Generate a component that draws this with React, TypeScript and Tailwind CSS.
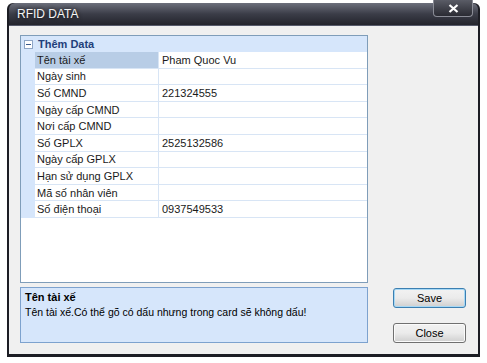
import React from 'react';

type Row = { label: string; value: string };

const rows: Row[] = [
  { label: 'Tên tài xế', value: 'Pham Quoc Vu' },
  { label: 'Ngày sinh', value: '' },
  { label: 'Số CMND', value: '221324555' },
  { label: 'Ngày cấp CMND', value: '' },
  { label: 'Nơi cấp CMND', value: '' },
  { label: 'Số GPLX', value: '2525132586' },
  { label: 'Ngày cấp GPLX', value: '' },
  { label: 'Hạn sử dụng GPLX', value: '' },
  { label: 'Mã số nhân viên', value: '' },
  { label: 'Số điện thoại', value: '0937549533' },
];

function WinButton({ label, focused }: { label: string; focused?: boolean }) {
  return (
    <button
      type="button"
      className={[
        'h-[20px] w-[73px] rounded-[3px] border bg-gradient-to-b from-[#f2f2f2] via-[#ebebeb] to-[#cfcfcf] text-[11px] text-black',
        focused ? 'border-[#3c7fb1] shadow-[inset_0_0_0_1px_#a6d8f5]' : 'border-[#707070] shadow-[inset_0_0_0_1px_#fbfbfb]',
      ].join(' ')}
    >
      {label}
    </button>
  );
}

export default function App() {
  return (
    <div className="relative h-[363px] w-[487px] overflow-hidden bg-white font-['Liberation_Sans',Arial,sans-serif] text-[11px] leading-[14px] text-[#1a1a1a]">
      <div className="ml-[7px] mt-[3px] flex h-[354px] w-[473px] flex-col rounded-t-[6px] bg-[#1c1d24] px-[2px] pb-[3px]">
        <div className="flex h-[22px] items-center rounded-t-[6px] bg-gradient-to-b from-[#6d707c] via-[#3b3d48] to-[#23242c] pl-[8px]">
          <span className="text-[12px] text-[#f4f4f4] [text-shadow:0_0_4px_#000]">RFID DATA</span>
        </div>
        <div className="flex flex-1 border-t border-[#55596a] bg-[#f0f0f0] pl-[11px] pr-[12px] pt-[9px]">
          <div className="flex w-[348px] flex-col gap-[4px]">
            <div className="flex h-[248px] flex-col border border-[#7f9db9] bg-white">
              <div className="flex h-[16px] items-center bg-[#d6e6fb]">
                <div className="flex w-[14px] justify-center">
                  <div className="flex h-[9px] w-[9px] items-center justify-center border border-[#8ea6c6] bg-white">
                    <div className="h-px w-[5px] bg-[#3a5a8c]" />
                  </div>
                </div>
                <span className="pl-[3px] font-bold text-[#1f3f7a]">Thêm Data</span>
              </div>
              {rows.map((r, i) => (
                <div key={r.label} className="flex h-[16.6px]">
                  <div className="w-[14px] shrink-0 bg-[#d6e6fb]" />
                  <div
                    className={[
                      'flex w-[124px] items-center border-b border-r border-[#d8e5f5] pl-[2px]',
                      i === 0 ? 'bg-[#b8cde6]' : '',
                    ].join(' ')}
                  >
                    {r.label}
                  </div>
                  <div className="flex flex-1 items-center border-b border-[#d8e5f5] pl-[3px]">{r.value}</div>
                </div>
              ))}
            </div>
            <div className="flex h-[56px] flex-col border border-[#7da2ce] bg-[#d6e6fb] px-[4px] pt-[2px]">
              <div className="font-bold text-black">Tên tài xế</div>
              <div className="mt-[1px] text-[10.5px] text-black">Tên tài xế.Có thể gõ có dấu nhưng trong card sẽ không dấu!</div>
            </div>
          </div>
          <div className="ml-auto flex flex-col gap-[15px] pt-[253px]">
            <WinButton label="Save" focused />
            <WinButton label="Close" />
          </div>
        </div>
      </div>
      <div className="absolute left-[433px] top-0 flex h-[17px] w-[40px] items-center justify-center rounded-b-[4px] border border-t-0 border-[#8a8c96] bg-gradient-to-b from-[#5a5c66] to-[#2a2b33]">
        <svg width="11" height="9" viewBox="0 0 11 9">
          <path d="M1.5 1 L9.5 8 M9.5 1 L1.5 8" stroke="#ffffff" strokeWidth="2.2" />
        </svg>
      </div>
    </div>
  );
}
